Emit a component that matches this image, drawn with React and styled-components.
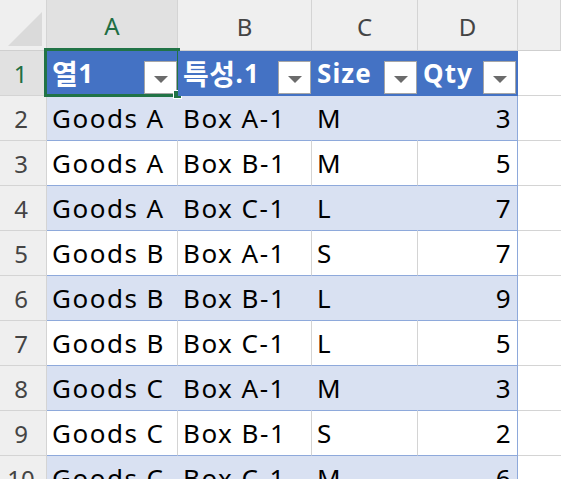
import styled, { createGlobalStyle } from "styled-components";

const GlobalStyle = createGlobalStyle`
  html, body {
    margin: 0;
    padding: 0;
    background: #ffffff;
    overflow: hidden;
  }
  body {
    font-family: "Noto Sans", "Noto Sans CJK KR", sans-serif;
  }
`;

const COLS = "47px 131px 134px 106px 100px 1fr";

const Sheet = styled.div`
  width: 561px;
  height: 479px;
  overflow: hidden;
  display: grid;
  grid-template-columns: ${COLS};
  grid-auto-rows: 45px;
  grid-template-rows: 51px;
`;

const Corner = styled.div`
  background: #efefef;
  border-right: 1px solid #d4d4d4;
  border-bottom: 1px solid #cfcfcf;
  position: relative;
  &::after {
    content: "";
    position: absolute;
    right: 4px;
    bottom: 4px;
    width: 0;
    height: 0;
    border-left: 34px solid transparent;
    border-bottom: 34px solid #dadada;
  }
`;

const ColHead = styled.div`
  background: ${(p) => (p.$active ? "#e1e1e1" : "#efefef")};
  color: ${(p) => (p.$active ? "#1f6e43" : "#444444")};
  border-right: 1px solid #d4d4d4;
  border-bottom: ${(p) => (p.$active ? "2px solid #217346" : "1px solid #cfcfcf")};
  display: flex;
  align-items: center;
  justify-content: center;
  font-size: 24px;
  padding-top: 2px;
  box-sizing: border-box;
`;

const RowHead = styled.div`
  background: ${(p) => (p.$active ? "#e1e1e1" : "#efefef")};
  color: ${(p) => (p.$active ? "#1f6e43" : "#444444")};
  border-right: ${(p) => (p.$active ? "2px solid #217346" : "1px solid #d4d4d4")};
  border-bottom: 1px solid #d4d4d4;
  display: flex;
  align-items: center;
  justify-content: center;
  padding-right: 4px;
  font-size: 24px;
  box-sizing: border-box;
`;

const HeadCell = styled.div`
  position: relative;
  background: #4472c4;
  color: #ffffff;
  font-weight: 700;
  font-size: 26px;
  display: flex;
  align-items: center;
  padding-left: 5px;
  box-sizing: border-box;
  border-bottom: 1px solid #4472c4;
  border-right: ${(p) => (p.$last ? "1px solid #4472c4" : "none")};
  letter-spacing: 1.1px;
`;

const Hangul = styled.span`
  font-size: 28px;
  letter-spacing: 0.5px;
`;

const FilterButton = styled.div`
  position: absolute;
  right: 1px;
  bottom: 1px;
  width: 33px;
  height: 33px;
  box-sizing: border-box;
  background: #ffffff;
  border: 1px solid #a6a6a6;
  display: flex;
  align-items: center;
  justify-content: center;
  &::after {
    content: "";
    width: 0;
    height: 0;
    margin-top: 3px;
    border-left: 7px solid transparent;
    border-right: 7px solid transparent;
    border-top: 7px solid #6b6b6b;
  }
`;

const Cell = styled.div`
  background: ${(p) => (p.$band ? "#d9e1f2" : "#ffffff")};
  color: #000000;
  font-size: 26px;
  letter-spacing: 1.5px;
  display: flex;
  align-items: center;
  justify-content: ${(p) => (p.$num ? "flex-end" : "flex-start")};
  padding: 0 5px 0 5px;
  box-sizing: border-box;
  border-bottom: 1px solid #8ea9db;
  border-right: ${(p) =>
    p.$last ? "1px solid #8ea9db" : p.$band ? "1px solid #d9e1f2" : "1px solid #d4d4d4"};
  white-space: nowrap;
  overflow: hidden;
`;

const Blank = styled.div`
  background: #ffffff;
  border-bottom: 1px solid #d4d4d4;
`;

const Selection = styled.div`
  position: absolute;
  left: -3px;
  top: -3px;
  right: -2px;
  bottom: -2px;
  border: 3px solid #217346;
  pointer-events: none;
  &::after {
    content: "";
    position: absolute;
    right: -5px;
    bottom: -5px;
    width: 7px;
    height: 7px;
    background: #217346;
    border: 1px solid #ffffff;
  }
`;

const headers = [
  ["열", "1"],
  ["특성", ".1"],
  ["", "Size"],
  ["", "Qty"],
];

const rows = [
  ["Goods A", "Box A-1", "M", 3],
  ["Goods A", "Box B-1", "M", 5],
  ["Goods A", "Box C-1", "L", 7],
  ["Goods B", "Box A-1", "S", 7],
  ["Goods B", "Box B-1", "L", 9],
  ["Goods B", "Box C-1", "L", 5],
  ["Goods C", "Box A-1", "M", 3],
  ["Goods C", "Box B-1", "S", 2],
  ["Goods C", "Box C-1", "M", 6],
];

export default function App() {
  return (
    <>
      <GlobalStyle />
      <Sheet>
        <Corner />
        {["A", "B", "C", "D", ""].map((c, i) => (
          <ColHead key={i} $active={i === 0}>
            {c}
          </ColHead>
        ))}

        <RowHead $active>1</RowHead>
        {headers.map(([ko, rest], i) => (
          <HeadCell key={i} $last={i === 3}>
            {ko && <Hangul>{ko}</Hangul>}
            {rest}
            <FilterButton />
            {i === 0 && <Selection />}
          </HeadCell>
        ))}
        <Blank />

        {rows.map((r, ri) => {
          const band = ri % 2 === 0;
          return [
            <RowHead key={`h${ri}`}>{ri + 2}</RowHead>,
            ...r.map((v, ci) => (
              <Cell key={`${ri}-${ci}`} $band={band} $num={ci === 3} $last={ci === 3}>
                {v}
              </Cell>
            )),
            <Blank key={`b${ri}`} />,
          ];
        })}
      </Sheet>
    </>
  );
}
